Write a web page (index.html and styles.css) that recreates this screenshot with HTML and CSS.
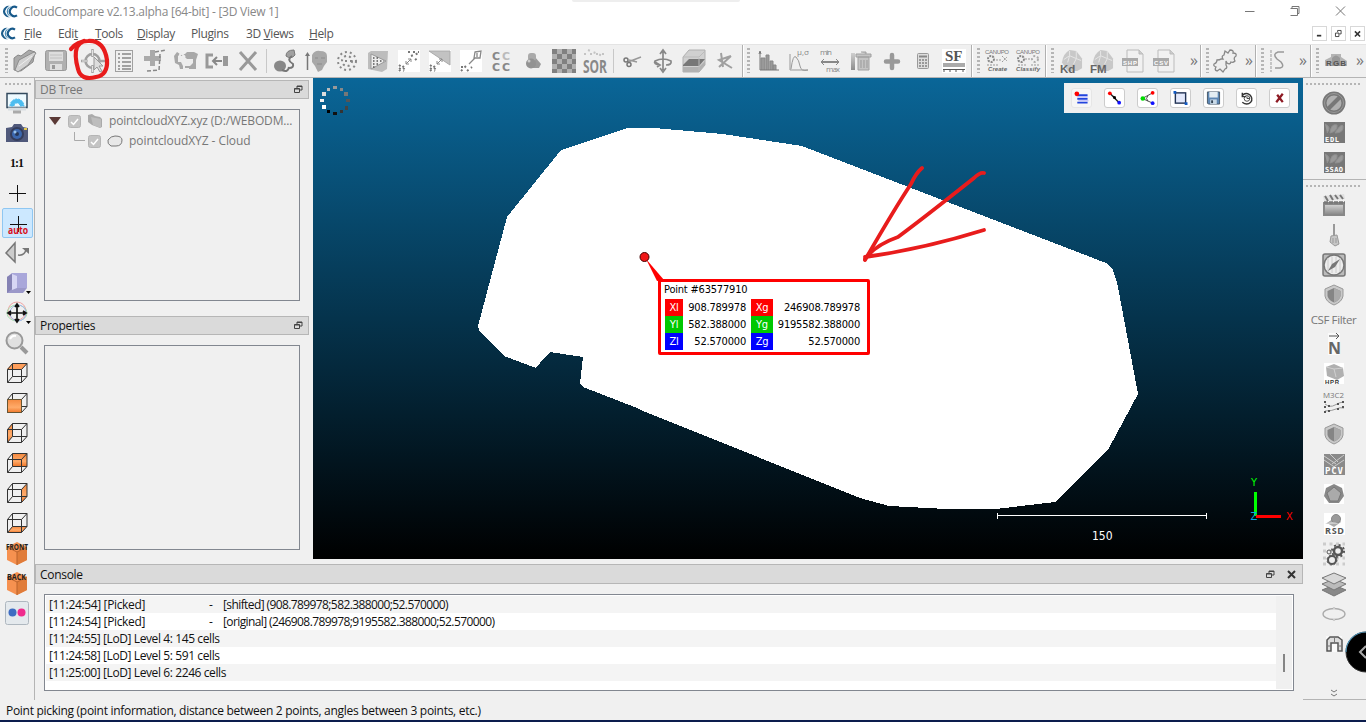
FILE: index.html
```html
<!DOCTYPE html>
<html lang="en">
<head>
<meta charset="utf-8">
<title>CloudCompare v2.13.alpha [64-bit] - [3D View 1]</title>
<link rel="stylesheet" href="styles.css">
</head>
<body>
<svg class="defs" aria-hidden="true">
  <defs>
    <linearGradient id="gGrey" x1="0" y1="0" x2="0" y2="1"><stop offset="0" stop-color="#cfcfcf"/><stop offset="1" stop-color="#8c8c8c"/></linearGradient>
    <linearGradient id="gOrange" x1="0" y1="0" x2="0" y2="1"><stop offset="0" stop-color="#f58a40"/><stop offset=".6" stop-color="#ffab6a"/><stop offset="1" stop-color="#f0782a"/></linearGradient>
    <symbol id="logo" viewBox="0 0 16 14"><path d="M7.500 2.200A5 5 0 1 0 7.500 11.800" fill="none" stroke="#1c5d8c" stroke-width="2.400"/><path d="M11 2.200A5 5 0 1 0 11 11.800" fill="none" stroke="#fff" stroke-width="3.600"/><path d="M11 2.200A5 5 0 1 0 11 11.800" fill="none" stroke="#4e8fb8" stroke-width="1.400"/><path d="M15 2.800A5 5 0 1 0 15 11.200" fill="none" stroke="#fff" stroke-width="3.600"/><path d="M15 2.800A5 5 0 1 0 15 11.200" fill="none" stroke="#17598a" stroke-width="2.400"/></symbol>
    <symbol id="float" viewBox="0 0 9 9"><path d="M3 3V1h5v4H6M3 1.500h5M.5 3.500h5v4h-5zM.5 4h5" fill="none" stroke="currentColor"/></symbol>
    <symbol id="wire" viewBox="0 0 24 24"><path d="M2.500 8.500h14v13h-14zM7.500 2.500h14.500v13H7.500zM2.500 8.500l5-6M16.500 8.500l5.500-6M16.500 21.500l5.500-6M2.500 21.500l5-6" fill="none" stroke="#333"/></symbol>
    <symbol id="shield" viewBox="0 0 24 24"><path d="M12 2l9 4v7q-1 6-9 9-8-3-9-9V6z" fill="#c9c9c9" stroke="#999"/><path d="M12 5l6.500 3v5q-1 4-6.500 6.500-5.500-2.500-6.500-6.500V8z" fill="#858585"/><path d="M12 5l6.500 3v5q-1 4-6.500 6.500z" fill="#aaa"/></symbol>
    <symbol id="rock" viewBox="0 0 24 24"><path d="M2 14Q3 5 10 1l7 1 6 8v10l-5 3H8z" fill="#c8c8c8"/><path d="M4 11l6-4 7 3 5 2M10 2v5l-2 7M17 2v8l-3 6" fill="none" stroke="#e6e6e6"/></symbol>
  </defs>
</svg>

<header class="titlebar">
  <svg class="logo"><use href="#logo"/></svg>
  <span class="title">CloudCompare v2.13.alpha [64-bit] - [3D View 1]</span>
  <svg class="winctl" viewBox="0 0 106 14"><path d="M2 6.500h9.500M47.500 3.500h7v7h-7M49 3V1.500h7v7h-1.500M93 1.500l9 9M102 1.500l-9 9" fill="none" stroke="#777"/></svg>
</header>
<nav class="menubar">
  <svg class="logo"><use href="#logo"/></svg>
  <span class="m1"><u>F</u>ile</span><span class="m2">Edi<u>t</u></span><span class="m3"><u>T</u>ools</span><span class="m4"><u>D</u>isplay</span><span class="m5">Plugins</span><span class="m6">3D <u>V</u>iews</span><span class="m7"><u>H</u>elp</span>
  <span class="mdi">
    <svg viewBox="0 0 14 15"><path d="M4 10h5" stroke="#333" stroke-width="2"/></svg>
    <svg viewBox="0 0 14 15"><path d="M6 6V4h4v4H8M3.500 7h4v4h-4z" fill="none" stroke="#333"/></svg>
    <svg viewBox="0 0 14 15"><path d="M4 5l6 6M10 5l-6 6" stroke="#333" stroke-width="1.800"/></svg>
  </span>
</nav>

<div class="toolbars">
  <div class="tb tb1"><i class="grip"></i>
    <svg class="ic" viewBox="0 0 24 24"><path d="M1 21V9l4-3 3 1 8-6 6 2-2 10-12 9z" fill="#aaa" stroke="#888"/><path d="M2 21L6 11 21 3l2 1-8 12-10 7z" fill="#d2d2d2" stroke="#8d8d8d"/><path d="M6 17L19 7" stroke="#eee"/></svg>
    <svg class="ic" viewBox="0 0 24 24"><rect x="1.500" y="1.500" width="21" height="20" rx="2" fill="#b0b0b0" stroke="#999"/><rect x="5" y="3" width="14" height="9" fill="#ddd"/><path d="M6 6h12M6 9h12" stroke="#c0c0c0"/><rect x="6" y="15" width="12" height="6" fill="#dedede"/><rect x="8" y="16" width="3" height="4" fill="#999"/></svg>
    <svg class="ic pick" viewBox="0 0 24 24"><circle cx="11.500" cy="12" r="7" fill="none" stroke="#a0a0a0" stroke-width="2.500"/><path d="M11.500 0v8M11.500 16v8M0 12h7M16 12h8" stroke="#a5a5a5" stroke-width="2.500"/><path d="M11.500 1v6M11.500 17v6M1 12h6" stroke="#e5e5e5"/><path d="M13 8v13l3-3 3 5 2-1-3-5h4z" fill="#ddd" stroke="#999"/></svg>
    <svg class="ic" viewBox="0 0 24 24"><rect x="3.500" y="1.500" width="17" height="21" fill="#efefef" stroke="#a0a0a0"/><path d="M6 5h2M6 9h2M6 13h2M6 17h2M6 20h2M10 5h9M10 9h9M10 13h9M10 17h9M10 20h9" stroke="#888" stroke-width="1.500"/></svg>
    <svg class="ic" viewBox="0 0 24 24"><path d="M9.500 1v16M1 9.500h17" stroke="#aaa" stroke-width="5"/><path d="M12 3l11-2M17 5l-1 17M4 22l12-1" stroke="#888" stroke-width="1.500" stroke-dasharray="4 2" fill="none"/></svg>
    <svg class="ic" viewBox="0 0 24 24"><path d="M0 7l3-4 3 2h5l2-2h7l4 2-2 6v9H6l-1-4-4-2z" fill="#a8a8a8"/><path d="M4 7h6l3 3h6v4l-3 3H9l-2-4H4z" fill="#ededed"/><path d="M5 8l2-4 4 4M10 14v6h5" stroke="#eee" fill="none" stroke-width="2"/></svg>
    <svg class="ic" viewBox="0 0 24 24"><path d="M8 6H2v12h6" fill="none" stroke="#999" stroke-width="3"/><path d="M17 12H8M12 8l-4 4 4 4" fill="none" stroke="#888" stroke-width="2"/><rect x="18" y="7" width="5" height="10" fill="#999"/></svg>
    <svg class="ic" viewBox="0 0 24 24"><path d="M4 3l16 18M20 3L4 21" stroke="#999" stroke-width="3"/></svg>
    <i class="sep"></i>
    <svg class="ic" viewBox="0 0 24 24"><ellipse cx="7" cy="17" rx="6" ry="5.500" fill="#888"/><path d="M13 7q0-6 8-6l1 5q-4 5-9 1z" fill="#a0a0a0" stroke="#777"/><path d="M19 7q-6 4 1 8 1 4-4 4M9 21q6 3 7-3" fill="none" stroke="#777" stroke-width="2"/></svg>
    <svg class="ic" viewBox="0 0 24 24"><path d="M3.500 21V5" stroke="#777" stroke-width="1.500"/><path d="M1 7l2.500-4L6 7z" fill="#777"/><path d="M8 6q3-5 8-4 7 0 7 5v6l-3 4-2 4-4 2-3-6-3-4z" fill="#a8a8a8"/><path d="M11 9h3M17 9h4M13 15h5" stroke="#8c8c8c"/></svg>
    <svg class="ic" viewBox="0 0 24 24" fill="none" stroke="#888" stroke-width="2" stroke-dasharray="2 3"><circle cx="12" cy="12" r="9"/><circle cx="12" cy="12" r="5"/><path d="M10 12h7"/></svg>
    <svg class="ic" viewBox="0 0 24 24"><path d="M2 4l3-2h17l-1 18-5 3-14-3z" fill="#bdbdbd"/><path d="M5 5l15 7-15 8z" fill="#ededed" stroke="#999"/><path d="M7 9h6M7 12h11M7 15h7M7 18h3" stroke="#555" stroke-width="1.500" stroke-dasharray="1.500 2"/></svg>
    <svg class="ic" viewBox="0 0 24 24"><path fill="#fff" d="M1 1h22v22H1z"/><path d="M9 15l5-5M9 12v3h3M14 13v-3h-3" fill="none" stroke="#888"/><path d="M2 22l5-5M2 16l8 6M11 3h11M14 7l8-3M18 11l4-3M2 19l5 3" stroke="#777" stroke-width="2" stroke-dasharray="2 3"/></svg>
    <svg class="ic" viewBox="0 0 24 24"><path fill="#fff" d="M1 1h22v22H1z"/><path d="M1 2h21v14z" fill="#c2c2c2" stroke="#aaa"/><path d="M9 15l5-5M9 12v3h3M14 13v-3h-3" fill="none" stroke="#888"/><path d="M2 22l5-5M2 16l8 6M2 19l5 3" stroke="#777" stroke-width="2" stroke-dasharray="2 3"/></svg>
    <svg class="ic" viewBox="0 0 24 24"><path fill="#fff" d="M1 1h22v22H1z"/><path d="M16 3l6-1-1 7h-6zM18 4v4M16 9l-6 6" fill="none" stroke="#888" stroke-width="1.300"/><path d="M2 22l6-6M8 22l5-4M2 18h2" stroke="#777" stroke-width="2" stroke-dasharray="2 3"/></svg>
    <svg class="ic cc" viewBox="0 0 24 24"><text x="2" y="11">C</text><text x="12" y="11" opacity=".5">C</text><text x="2" y="22">C</text><text x="12" y="22">C</text></svg>
    <svg class="ic" viewBox="0 0 24 24"><path d="M14 8l6 7-2 4h-7z" fill="#999"/><rect x="7" y="4" width="8" height="8" rx="3" fill="#aaa"/><circle cx="10" cy="14.500" r="5" fill="#929292"/><circle cx="8" cy="12" r="1.500" fill="#ccc"/></svg>
    <svg class="ic" viewBox="0 0 24 24"><path fill="#808080" d="M0 0h24v24H0z"/><path d="M5 0h5v5H5zM15 0h5v5h-5zM0 5h5v5H0zM10 5h5v5h-5zM20 5h4v5h-4zM5 10h5v5H5zM15 10h5v5h-5zM0 15h5v5H0zM10 15h5v5h-5zM20 15h4v5h-4zM5 20h5v4H5zM15 20h5v4h-5z" fill="#b1b1b1"/></svg>
    <svg class="ic" viewBox="0 0 24 24"><path d="M1 5h22M5 1l15 6" stroke="#c4c4c4" stroke-width="2" stroke-dasharray="2 4"/><text x="0" y="24" class="sor" textLength="24" lengthAdjust="spacingAndGlyphs">SOR</text></svg>
    <i class="sep"></i>
    <svg class="ic" viewBox="0 0 24 24"><path d="M8 13l13-5M9 11l8 2" stroke="#999" stroke-width="1.500"/><circle cx="6" cy="11" r="2" fill="none" stroke="#777" stroke-width="1.500"/><circle cx="9" cy="15.500" r="2" fill="none" stroke="#777" stroke-width="1.500"/></svg>
    <svg class="ic" viewBox="0 0 24 24"><path d="M12 3v18M9 5l3-4 3 4M9 19l3 4 3-4M9 16q-7-1-5-4 8-4 16 0 1 4-5 4M4 13l5 3-3 2" fill="none" stroke="#888" stroke-width="1.700"/></svg>
    <svg class="ic" viewBox="0 0 24 24"><path d="M1 8l6-7h16v15l-6 7H1z" fill="#d0d0d0" stroke="#b0b0b0"/><path d="M1 16l6-6h16l-6 7H1z" fill="#777"/><path d="M1 18h16l6-6v4l-6 7H1z" fill="#b2b2b2"/><path d="M17 22V9M1 8h16l6-6" fill="none" stroke="#bbb"/></svg>
    <svg class="ic" viewBox="0 0 24 24"><path d="M8 4l2 14M18 7L6 11l13 8M6 18L18 7" fill="none" stroke="#a0a0a0" stroke-width="2"/></svg>
  </div>
  <div class="tb tb2"><i class="grip"></i>
    <svg class="ic" viewBox="0 0 24 24"><path d="M5 21V9h4v12M10 21V6h3v15M14 21V12h3v9M17 21v-5h3v5" fill="#999" stroke="#888"/><path d="M4 3v18h19M3 5l1-3 1 3" fill="none" stroke="#777"/></svg>
    <svg class="ic" viewBox="0 0 24 24"><path d="M3 5v16h18M4 20Q6 5 9 8t4 9 8 4" fill="none" stroke="#999"/><text x="10" y="6" class="tiny grey">μ,σ</text></svg>
    <svg class="ic" viewBox="0 0 24 24"><text x="2" y="6" class="tiny grey" textLength="12">min</text><text x="8" y="23" class="tiny grey" textLength="14">max</text><path d="M3 13h18" stroke="#888" stroke-width="2"/><path d="M6 10l-3 3 3 3M18 10l3 3-3 3" fill="none" stroke="#888"/></svg>
    <svg class="ic" viewBox="0 0 24 24"><rect x="2" y="4" width="4" height="17" fill="url(#gGrey)"/><path d="M9 8h11v13H9zM7 5h15v3H7zM12 3h5v2" fill="#c4c4c4" stroke="#a0a0a0"/><path d="M12 11v8M15 11v8M18 11v8" stroke="#999"/></svg>
    <svg class="ic" viewBox="0 0 24 24"><path d="M12 6v13M6 12.500h12" stroke="#999" stroke-width="4.500" stroke-linecap="round"/></svg>
    <svg class="ic" viewBox="0 0 24 24"><rect x="6.500" y="4.500" width="11" height="15" rx="1" fill="#ddd" stroke="#999"/><path d="M8 7.500h8" stroke="#888" stroke-width="2"/><path d="M8 11h8M8 14h8M8 17h8" stroke="#999" stroke-width="2" stroke-dasharray="2 1"/></svg>
    <svg class="ic" viewBox="0 0 24 24"><path fill="#fff" d="M0 0h24v24H0z"/><text x="3" y="12" class="sf">SF</text><path d="M1 16h22" stroke="#aaa" stroke-width="4"/><path d="M1 20.500h22M2 20v3M8 20v3M14 20v3M21 20v3" stroke="#555"/></svg>
  </div>
  <div class="tb tb3"><i class="grip"></i>
    <svg class="ic wide" viewBox="0 0 26 24"><text x="1" y="5" class="micro" textLength="24">CANUPO</text><circle cx="7" cy="10" r="3" fill="none" stroke="#888" stroke-width="2" stroke-dasharray="2 1"/><path d="M12 11h5M3 16h11M18 7l5 5M18 13l5-5" stroke="#999" stroke-dasharray="2 1"/><text x="4" y="22" class="micro bold" textLength="19">Create</text></svg>
    <svg class="ic wide" viewBox="0 0 26 24"><text x="1" y="5" class="micro" textLength="24">CANUPO</text><circle cx="6" cy="10" r="3" fill="none" stroke="#888" stroke-width="2" stroke-dasharray="2 1"/><circle cx="20" cy="10" r="3" fill="none" stroke="#aaa" stroke-width="2" stroke-dasharray="2 2"/><path d="M10 10h6M3 16h9M16 16h8" stroke="#999" stroke-dasharray="2 1"/><text x="1" y="22" class="micro bold" textLength="24">Classify</text></svg>
  </div>
  <div class="tb tb4"><i class="grip"></i>
    <svg class="ic" viewBox="0 0 24 24"><use href="#rock" width="23" height="23"/><text x="0" y="24" class="kd">Kd</text></svg>
    <svg class="ic" viewBox="0 0 24 24"><use href="#rock" width="23" height="23"/><text x="-1" y="24" class="kd">FM</text></svg>
    <svg class="ic" viewBox="0 0 24 24"><path d="M5 1h12l4 4v18H5z" fill="#f1f1f1" stroke="#bbb"/><path d="M17 1v4h4" fill="#ccc" stroke="#bbb"/><path fill="#aaa" d="M0 9h16v8H0z"/><text x="1" y="15.500" class="micro white" textLength="14">SHP</text></svg>
    <svg class="ic" viewBox="0 0 24 24"><path d="M5 1h12l4 4v18H5z" fill="#f1f1f1" stroke="#bbb"/><path d="M17 1v4h4" fill="#ccc" stroke="#bbb"/><path fill="#aaa" d="M0 9h16v8H0z"/><text x="1" y="15.500" class="micro white" textLength="14">CSV</text></svg>
    <b class="more">»</b>
  </div>
  <div class="tb tb5"><i class="grip"></i>
    <svg class="ic" viewBox="0 0 24 24"><path d="M10 10Q8 7 11 6l1-4 3 2 2-3q4 0 3 3 4 0 3 3-3 2-1 5-2 2-4 1-1 3-4 1l-1-2 0 4q2 3-1 4l-2 3-3-3-3 2q-3-1-1-4-3-1-2-3 3-1 3-4 3 0 4-1z" fill="#eee" stroke="#888" stroke-width="1.300"/></svg>
    <b class="more">»</b>
  </div>
  <div class="tb tb6"><i class="grip"></i>
    <svg class="ic" viewBox="0 0 24 24"><path d="M3 1v22" stroke="#999" stroke-dasharray="3 1"/><path d="M16 3H10Q4 5 9 10l4 3q4 5-1 6H7" fill="none" stroke="#999" stroke-width="1.500"/></svg>
    <b class="more">»</b>
  </div>
  <div class="tb tb7"><i class="grip"></i>
    <svg class="ic" viewBox="0 0 24 24"><path d="M1 11l6-3V5h10v3l6 4v5H1z" fill="#b4b4b4"/><path d="M8 9q4-5 8 0v8H8z" fill="#999"/><text x="2" y="17" class="rgb" textLength="20">RGB</text></svg>
    <b class="more">»</b>
  </div>
</div>

<main class="body">
  <aside class="left"><i class="hgrip"></i>
    <svg class="ic" viewBox="0 0 24 24"><rect x="2" y="2.500" width="20" height="14" fill="#eefaff" stroke="#334a5e" stroke-width="1.500"/><path d="M3 16.500h18v3H3z" fill="#d8dee2"/><path d="M5 15a7 7 0 0 1 14 0h-4a3 3 0 0 0-6 0z" fill="#4dbdf0" stroke="#4dbdf0" stroke-dasharray="2 1"/><path d="M8 21h8" stroke="#aaa" stroke-width="3"/></svg>
    <svg class="ic" viewBox="0 0 24 24"><path d="M1 7l6-1 2-3h7l2 3 5 1v14H1z" fill="#50597b"/><circle cx="12" cy="13" r="7" fill="#343d5c"/><circle cx="12" cy="13" r="5" fill="#3b67ae"/><circle cx="12" cy="13" r="2" fill="#263656"/><circle cx="10" cy="11" r="1.500" fill="#9ac3ea"/><path d="M19 7h3v2h-3z" fill="#e5c84c"/></svg>
    <svg class="ic" viewBox="0 0 24 24"><text x="5" y="16" class="one" textLength="14">1:1</text></svg>
    <svg class="ic" viewBox="0 0 24 24"><path d="M12.500 4v17M4 12.500h17" stroke="#111"/></svg>
    <span class="active"><svg class="ic" viewBox="0 0 24 24"><path d="M13.500 5v16M5 13.500h17" stroke="#111"/><text x="3" y="23" class="auto" textLength="20" lengthAdjust="spacingAndGlyphs">auto</text></svg></span>
    <svg class="ic" viewBox="0 0 24 24"><path d="M10 2v19L1 12z" fill="#ccc" stroke="#777" stroke-width="1.500"/><path d="M13 14q6 1 8-5" fill="none" stroke="#777" stroke-width="1.500"/><path d="M17 7h7v6z" fill="#777"/></svg>
    <svg class="ic" viewBox="0 0 28 24"><path d="M2 6l5-4h15v15l-4 5H2z" fill="#9b98c9"/><path d="M7 2h15v15H7z" fill="#a9a7da"/><path d="M2 6l5-3v15l-5 4z" fill="#8582b4"/><path d="M7 3l5 2v12l-5 2z" fill="#d7d6f4"/><path d="M21 20h5l-2.500 3z" fill="#000"/></svg>
    <svg class="ic" viewBox="0 0 28 24"><circle cx="12" cy="10" r="9" fill="none" stroke="#f1a4a4"/><ellipse cx="12" cy="12" rx="10" ry="8" fill="none" stroke="#a8dcab"/><circle cx="13" cy="12" r="8" fill="none" stroke="#a4b8eb"/><path d="M12 4v16M4 12h16M10 6l2-3 2 3M10 18l2 3 2-3M6 10l-3 2 3 2M18 10l3 2-3 2" fill="none" stroke="#111" stroke-width="1.700"/><path d="M21 20h5l-2.500 3z"/></svg>
    <svg class="ic" viewBox="0 0 24 24"><path d="M16 16l6 6" stroke="#999" stroke-width="4"/><circle cx="9.500" cy="9.500" r="8" fill="#e0e0e0" stroke="#999" stroke-width="2"/><path d="M5 8q2-4 6-3" stroke="#fff" fill="none" stroke-width="2"/></svg>
    <svg class="ic" viewBox="0 0 24 24"><path d="M2 8l5-5h15l-5 5z" fill="#ff9e5a"/><use href="#wire"/></svg>
    <svg class="ic" viewBox="0 0 24 24"><use href="#wire"/><path d="M2.500 8.500h14v13h-14z" fill="url(#gOrange)" stroke="#653"/></svg>
    <svg class="ic" viewBox="0 0 24 24"><path d="M2.500 8.500l5-6v13l-5 6z" fill="url(#gOrange)"/><use href="#wire"/></svg>
    <svg class="ic" viewBox="0 0 24 24"><path d="M7 3h15v12H7z" fill="url(#gOrange)"/><use href="#wire"/></svg>
    <svg class="ic" viewBox="0 0 24 24"><path d="M16.500 8.500l5.500-6v13l-5.500 6z" fill="url(#gOrange)"/><use href="#wire"/></svg>
    <svg class="ic" viewBox="0 0 24 24"><path d="M2.500 21.500l5-6H22l-5.500 6z" fill="url(#gOrange)"/><use href="#wire"/></svg>
    <svg class="ic" viewBox="0 0 24 24"><path d="M12 1l10 5v13l-10 5L2 19V6z" fill="#f69150"/><path d="M12 11l10-5v13l-10 5z" fill="#e07c3a"/><path d="M2 6l10 5v13M12 11l10-5" fill="none" stroke="#b9622c"/><text x="1" y="9" class="face" textLength="22" lengthAdjust="spacingAndGlyphs">FRONT</text></svg>
    <svg class="ic" viewBox="0 0 24 24"><path d="M12 1l10 5v13l-10 5L2 19V6z" fill="#f69150"/><path d="M12 11l10-5v13l-10 5z" fill="#e07c3a"/><path d="M2 6l10 5v13M12 11l10-5" fill="none" stroke="#b9622c"/><text x="2" y="9" class="face" textLength="19" lengthAdjust="spacingAndGlyphs">BACK</text></svg>
    <svg class="ic" viewBox="0 0 24 24"><rect x=".5" y=".5" width="23" height="23" rx="2" fill="#e4e9ed" stroke="#aeb7bf"/><circle cx="7.500" cy="11.500" r="4" fill="#3d6cc2"/><circle cx="16.500" cy="11.500" r="4" fill="#ef2b8d"/></svg>
  </aside>

  <section class="center">
    <div class="upper">
      <div class="docks">
        <div class="dockhead dim"><span>DB Tree</span><svg class="fl"><use href="#float"/></svg></div>
        <div class="tree">
          <div class="row"><svg class="tri" viewBox="0 0 12 8"><path d="M0 0h12L6 8z" fill="#5b3a36"/></svg><svg class="chk" viewBox="0 0 13 13"><rect x=".5" y=".5" width="12" height="12" rx="2" fill="#c4c4c4" stroke="#b5b5b5"/><path d="M3 7l2.500 2.500L10 4" fill="none" stroke="#fff" stroke-width="1.500"/></svg><svg class="fold" viewBox="0 0 16 14"><path d="M1 1l4-1 3 2 5 1 2 2v8l-2 1-8-3-4-3z" fill="#aaa"/><path d="M4 3l10 2v9l-8-3z" fill="#bdbdbd"/></svg><span class="file">pointcloudXYZ.xyz (D:/WEBODM...</span></div>
          <div class="row child"><svg class="branch" viewBox="0 0 12 10"><path d="M1.500 0v8.500H12" fill="none" stroke="#aaa"/></svg><svg class="chk" viewBox="0 0 13 13"><rect x=".5" y=".5" width="12" height="12" rx="2" fill="#c4c4c4" stroke="#b5b5b5"/><path d="M3 7l2.500 2.500L10 4" fill="none" stroke="#fff" stroke-width="1.500"/></svg><svg class="fold" viewBox="0 0 16 14"><path d="M4 12Q0 10 1 6q3-4 7-4 7 0 7 4 0 6-6 6z" fill="#e8e8e8" stroke="#777"/></svg><span>pointcloudXYZ - Cloud</span></div>
        </div>
        <div class="dockhead prop"><span>Properties</span><svg class="fl"><use href="#float"/></svg></div>
        <div class="props"></div>
      </div>
      <div class="view">
        <svg class="scene" viewBox="313 78 990 481">
          <polygon shape-rendering="crispEdges" fill="#fff" points="628,128 654,128 723,134 802,146 1106,263 1112,268 1117,282 1138,394 1109,448 1055,502 996,509 947,509 889,506 860,498 643,411 637,408 583,387 580,384 583,357 550,352 545,357 536,368 504,356 480,332 478,326 507,217 561,150"/>
          <g shape-rendering="crispEdges"><path d="M346 99h4v3h-4z" fill="#555"/><path d="M345 106h3v4h-3z" fill="#444"/><path d="M340 110h3v3h-3z" fill="#333"/><path d="M333 112h4v3h-4z" fill="#111"/><path d="M327 110h3v3h-3z" fill="#000"/><path d="M322 105h4v4h-4z" fill="#fff"/><path d="M320 99h4v3h-4z" fill="#f2f2f2"/><path d="M322 92h4v4h-4z" fill="#ddd"/><path d="M327 88h3v3h-3z" fill="#bbb"/><path d="M333 86h4v3h-4z" fill="#999"/><path d="M340 88h3v3h-3z" fill="#888"/><path d="M344 92h4v4h-4z" fill="#777"/></g>
          <path d="M646 259l11 22 7-1z" fill="#f00"/><circle cx="644.500" cy="257" r="4.500" fill="#f01818" stroke="#400"/>
          <path d="M997.500 513v6M1206.500 513v6M997 515.500h210" stroke="#fff" fill="none"/>
          <text x="1092" y="540" class="scale">150</text>
          <path d="M1255.500 492v24" stroke="#0f0" stroke-width="3"/><path d="M1256 516.500h25" stroke="#f00" stroke-width="3"/>
          <text x="1251" y="486" class="axis" fill="#0f0">Y</text><text x="1286" y="520" class="axis" fill="#f00">X</text><text x="1250.500" y="520" class="axis" fill="#00a8e8">Z</text>
          <g fill="none" stroke="#e81c1c" stroke-width="3.800" stroke-linecap="round" stroke-linejoin="round"><path d="M922 168Q916 173 911 184Q895 208 865 260"/><path d="M984 173Q980 172 974 178Q925 217 898 237Q875 245 865 259"/><path d="M984 230Q923 249 865 257"/></g>
        </svg>
        <div class="viewtools">
          <span class="soft"><svg viewBox="0 0 15 15"><path d="M3 4.500h11M3 8.500h11M3 12.500h11" stroke="#24d" stroke-width="2"/><path d="M3 6.500h11M4 10.500h11" stroke="#aaf"/><circle cx="2.500" cy="3" r="2.500" fill="#f00"/></svg></span>
          <span><svg viewBox="0 0 15 15"><path d="M2 2l11 11" stroke="#222" stroke-width="1.500"/><circle cx="2.500" cy="2.500" r="2" fill="#f00"/><circle cx="12.500" cy="12.500" r="2" fill="#11f"/><path d="M6 5l3 1v3l-3-1z"/></svg></span>
          <span><svg viewBox="0 0 15 15"><path d="M13 2L2 8l11 5M8 5q-3 3 0 6" fill="none" stroke="#444"/><circle cx="13" cy="2" r="2" fill="#f00"/><circle cx="2.500" cy="8" r="2.500" fill="#0d0"/><circle cx="13" cy="13" r="2" fill="#11f"/></svg></span>
          <span><svg viewBox="0 0 15 15"><rect x="2" y="2" width="11" height="11" fill="#e2e8fb" stroke="#235" stroke-width="1.500"/><path d="M0 0h3v3H0zM12 12h3v3h-3z" fill="#125ac4"/></svg></span>
          <span><svg viewBox="0 0 15 15"><path d="M1 1h13v13H2l-1-1z" fill="#5d87b4" stroke="#456"/><path d="M3 1h9v6H3z" fill="#e4edf3"/><path d="M4 9h7v5H4z" fill="#c9d9e7"/><path d="M5 10h2v3H5z" fill="#345"/></svg></span>
          <span><svg viewBox="0 0 15 15"><path d="M3 2v4h4M3 5q3-4 8-1 4 4 1 8-4 4-9 0" fill="none" stroke="#333" stroke-width="1.500"/><circle cx="8" cy="8" r="3" fill="none" stroke="#444"/><path d="M8 6v2h3" fill="none" stroke="#333"/></svg></span>
          <span><svg viewBox="0 0 15 15"><path d="M5 4l6 8M11 3l-7 9" stroke="#8e1b24" stroke-width="2.400"/></svg></span>
        </div>
        <div class="callout">
          <div class="ptitle">Point #63577910</div>
          <div class="coords">
            <b class="x">Xl</b><span>908.789978</span><b class="x">Xg</b><span>246908.789978</span>
            <b class="y">Yl</b><span>582.388000</span><b class="y">Yg</b><span>9195582.388000</span>
            <b class="z">Zl</b><span>52.570000</span><b class="z">Zg</b><span>52.570000</span>
          </div>
        </div>
      </div>
    </div>
    <div class="dockhead console-head"><span>Console</span><svg class="fl"><use href="#float"/></svg><svg class="close" viewBox="0 0 9 9"><path d="M1 1l7 7M8 1L1 8" stroke="#333" stroke-width="2"/></svg></div>
    <div class="console">
      <div class="lines">
        <p><span class="tag">[11:24:54] [Picked]</span><span class="dash">-</span><span class="val">[shifted] (908.789978;582.388000;52.570000)</span></p>
        <p><span class="tag">[11:24:54] [Picked]</span><span class="dash">-</span><span class="val">[original] (246908.789978;9195582.388000;52.570000)</span></p>
        <p>[11:24:55] [LoD] Level 4: 145 cells</p>
        <p>[11:24:58] [LoD] Level 5: 591 cells</p>
        <p>[11:25:00] [LoD] Level 6: 2246 cells</p>
      </div>
      <div class="scroll"><i></i></div>
    </div>
  </section>

  <aside class="right">
    <div class="rgroup r1"><i class="hgrip"></i>
      <svg class="ic" viewBox="0 0 24 24"><circle cx="12" cy="12" r="9.500" fill="#b0b0b0" stroke="#777" stroke-width="4"/><circle cx="12" cy="12" r="9.500" fill="none" stroke="#999"/><path d="M6 18L18 6" stroke="#777" stroke-width="4"/></svg>
      <svg class="ic" viewBox="0 0 24 24"><path fill="#777" d="M2 1h21v21H2z"/><path d="M8 12q1-10 7-8 1 6-7 8M13 12q6-10 8-7 1 7-8 7M3 3q7 3 2 9" fill="#999" stroke="#909090"/><text x="3" y="21" class="pix" textLength="14">EDL</text></svg>
      <svg class="ic" viewBox="0 0 24 24"><path fill="#777" d="M2 1h21v21H2z"/><path d="M8 12q1-10 7-8 1 6-7 8M13 12q6-10 8-7 1 7-8 7M3 3q7 3 2 9" fill="#999" stroke="#909090"/><text x="3" y="21" class="pix" textLength="18">SSAO</text></svg>
    </div>
    <div class="rgroup r2"><i class="hgrip"></i>
      <svg class="ic" viewBox="0 0 24 24"><path d="M1 9h22v14H1z" fill="#888"/><path d="M3 12h18v9H3z" fill="url(#gGrey)"/><path d="M1 3l21-2 1 5-21 2z" fill="#e0e0e0"/><path d="M3 3l3 5M8 2l3 5M13 2l3 4M18 2l3 4" stroke="#777" stroke-width="2"/><path d="M2 9.500h21" stroke="#777" stroke-width="2.500" stroke-dasharray="4 1"/></svg>
      <svg class="ic" viewBox="0 0 24 24"><path d="M12 1v12" stroke="#999" stroke-width="2"/><path d="M9 13l6-1 2 9-4 2-5-4z" fill="#c6c6c6" stroke="#999"/><path d="M11 15v5M14 15v5" stroke="#999"/></svg>
      <svg class="ic" viewBox="0 0 24 24"><rect x="1" y="1" width="22" height="22" rx="2" fill="#bbb" stroke="#777" stroke-width="1.500"/><circle cx="12" cy="12" r="10" fill="#ededed" stroke="#777" stroke-width="1.500"/><path d="M6 5v14M10 4v16M14 4v16M18 5v14" stroke="#ccc"/><path d="M18 6l-5 8-7 4 4-7z" fill="#777"/></svg>
      <svg class="ic" viewBox="0 0 24 24"><use href="#shield"/></svg>
      <span class="csf">CSF Filter</span>
      <svg class="ic north" viewBox="0 0 24 24"><path fill="#fafafa" d="M6 1h12v22H6z"/><path d="M7 4h10M14 1l3 3-3 3" fill="none" stroke="#555"/><text x="6" y="22" class="n">N</text></svg>
      <svg class="ic" viewBox="0 0 24 24"><path fill="#fff" d="M2 1h20v21H2z"/><path d="M4 5l8-3 9 4 1 8-7 4-10-4z" fill="#b0b0b0"/><path d="M4 5l8 2 9-1M12 7l2 8" stroke="#d0d0d0" fill="none"/><text x="3" y="22" class="micro dark" textLength="14">HPR</text></svg>
      <svg class="ic" viewBox="0 0 24 24"><text x="1" y="6" class="tiny mid" textLength="21" lengthAdjust="spacingAndGlyphs">M3C2</text><path d="M3 12q5 4 10 1t9-3M3 19q7 0 11-2t8-1" stroke="#999" fill="none"/><path d="M3 9v13M7 13v9M16 11v9M21 9v9" stroke="#555" stroke-dasharray="2 3" stroke-width="2"/></svg>
      <svg class="ic" viewBox="0 0 24 24"><use href="#shield"/></svg>
      <svg class="ic" viewBox="0 0 24 24"><path fill="#8a8a8a" d="M2 2h21v21H2z"/><path d="M2 4l12 8M2 8l12 8M22 3L10 12M22 8l-12 8M8 2l8 8" stroke="#ccc"/><text x="3" y="22" class="pix big" textLength="18">PCV</text></svg>
      <svg class="ic" viewBox="0 0 24 24"><path fill="#fff" d="M2 2h20v20H2z"/><path d="M12 2l8 4 2 8-5 7H7l-5-7 2-8z" fill="#888"/><path d="M12 5l7 6-3 8H8l-3-8z" fill="#aaa" stroke="#777"/></svg>
      <svg class="ic" viewBox="0 0 24 24"><path fill="#fff" d="M2 1h21v22H2z"/><path d="M5 11l10-7 4 6-7 5z" fill="#aaa"/><circle cx="14" cy="7" r="4.500" fill="#999" stroke="#888"/><path d="M3 12q7-4 14 0" fill="#ccc"/><text x="3" y="21.500" class="rsd" textLength="19">RSD</text></svg>
      <svg class="ic" viewBox="0 0 24 24"><path d="M1 2h22M1 9h22M1 16h22M1 22h22" stroke="#ccc" stroke-width="3" stroke-dasharray="3 3.500"/><circle cx="16" cy="9" r="4" fill="#eee" stroke="#555" stroke-width="2.500"/><circle cx="16" cy="9" r="6" fill="none" stroke="#555" stroke-width="2" stroke-dasharray="2 2.700"/><circle cx="10" cy="18" r="4" fill="#eee" stroke="#555" stroke-width="2" /><circle cx="10" cy="18" r="5" fill="none" stroke="#555" stroke-dasharray="2 2"/><circle cx="7" cy="10" r="2" fill="none" stroke="#555"/></svg>
      <svg class="ic" viewBox="0 0 24 24"><path d="M0 18l12-5 12 5-12 6z" fill="#888" stroke="#777"/><path d="M0 12l12-5 12 5-12 6z" fill="#bbb" stroke="#777"/><path d="M0 6l12-5 12 5-12 6z" fill="#d8d8d8" stroke="#777"/></svg>
      <svg class="ic" viewBox="0 0 24 24"><ellipse cx="12" cy="12" rx="11" ry="5.500" fill="none" stroke="#aaa" stroke-width="1.300"/><path d="M11 6h2M11 18h2" stroke="#ccc" stroke-width="2"/></svg>
      <svg class="ic" viewBox="0 0 24 24"><path fill="#fafafa" d="M4 4h16v16H4z"/><path d="M5 19V8l3-3h8l4 3v11h-4v-8H9v8z" fill="#ddd" stroke="#555" stroke-width="1.500"/><path d="M12.500 5v6M5 14h4M16 14h4" stroke="#777"/></svg>
      <svg class="down" viewBox="0 0 8 8"><path d="M1 1l3 2 3-2M1 5l3 2 3-2" fill="none" stroke="#777"/></svg>
    </div>
  </aside>
</main>
<footer class="status">Point picking (point information, distance between 2 points, angles between 3 points, etc.)</footer>

<i class="notch"></i>
<svg class="ink" viewBox="0 0 44 46"><path d="M3 11Q9 3 20 3Q36 2 39 22Q40 37 28 39Q13 43 10 31Q6 17 9 9Q11 5 16 3" fill="none" stroke="#e81c1c" stroke-width="4.200" stroke-linecap="round"/></svg>
<svg class="puck" viewBox="0 0 21 42"><circle cx="21" cy="21" r="20" fill="#000" stroke="#333"/><path d="M1 21A20 20 0 0 1 21 1" fill="none" stroke="#4c8eb0" stroke-width="1.200"/><path d="M21 15l-6 6 6 6" fill="none" stroke="#aaa" stroke-width="2"/></svg>
</body>
</html>
```
FILE: styles.css
```css
* { box-sizing: border-box; }
body { margin: 0; width: 1366px; height: 722px; overflow: hidden; display: flex; flex-direction: column; position: relative; background: #f0f0f0; color: #111; font: 12px/16px "Open Sans", "Noto Sans", sans-serif; letter-spacing: -0.38px; }
.defs { position: absolute; width: 0; height: 0; }
svg { display: block; flex: none; overflow: visible; }
p { margin: 0; }
svg text { letter-spacing: 0; }

.titlebar { height: 23px; background: #fff; display: flex; align-items: center; padding: 0 17px 0 3px; color: #888; }
.logo { width: 15px; height: 13px; }
.title { margin-left: 5px; letter-spacing: -0.25px; }
.winctl { width: 106px; height: 14px; margin-left: auto; }
.menubar { height: 21px; background: #fff; display: flex; align-items: center; padding-left: 1px; color: #555; }
.menubar > span { width: 42px; white-space: nowrap; }
.menubar .m1 { margin-left: 8px; width: 34px; }
.menubar .m2 { width: 37px; }
.menubar .m4 { width: 54px; }
.menubar .m5 { width: 55px; }
.menubar .m6 { width: 63px; }
.menubar .mdi { width: auto; margin-left: auto; display: flex; gap: 4px; padding-right: 1px; }
.mdi svg { width: 15px; height: 15px; background: #fff; border: 1px solid #d8d8d8; }

.toolbars { height: 34px; display: flex; border-top: 1px solid #e4e4e4; border-bottom: 1px solid #b4b4b4; }
.tb { flex: none; display: flex; align-items: center; gap: 7px; border-right: 1px solid #b0b0b0; padding: 0 0 1px 5px; box-shadow: 1px 0 #fff; }
.ic { width: 24px; height: 24px; }
.grip { width: 3px; height: 25px; margin-right: -3px; background: repeating-linear-gradient(#b5b5b5 0 2px, #f0f0f0 2px 4px); flex: none; }
.sep { width: 1px; height: 24px; margin: 0 -1px; background: #c8c8c8; flex: none; }
.tb1 { width: 743px; }
.tb1 .grip { margin-right: -2px; }
.tb .pick { margin-left: 6px; }
.tb2 { width: 229px; padding-left: 4px; }
.tb2 .grip { margin-right: -1px; }
.tb3 { width: 74px; gap: 5px; }
.tb3 .grip { margin-right: -1px; }
.tb .wide { width: 26px; }
.tb4 { width: 155px; }
.tb4 .grip { margin-right: -1px; }
.tb5, .tb6 { width: 55px; }
.tb6 .grip { margin-right: -3px; }
.tb7 { flex: 1; border-right: 0; }
.tb7 .grip { margin-right: -2px; }
.more { font: 16px/18px "Open Sans", sans-serif; color: #777; margin-top: -1px; }
.tb4 .more { margin-left: 6px; }
.tb5 .more { margin-left: 1px; }
.tb7 .more { margin-left: 1px; }

.cc text { font: bold 11px "DejaVu Sans", sans-serif; fill: #888; }
.sor { font: bold 17px "Open Sans", sans-serif; fill: #888; }
.tiny { font: 8px "Open Sans", sans-serif; }
.grey { fill: #888; }
.mid { fill: #777; }
.sf { font: bold 15px "Liberation Serif", serif; fill: #555; }
.micro { font: 6px "Liberation Sans", sans-serif; fill: #777; }
.bold { font-weight: bold; fill: #666; font-style: italic; }
.white { fill: #fff; font-weight: bold; }
.dark { fill: #333; font-weight: bold; }
.kd { font: bold 11.5px "Liberation Sans", sans-serif; fill: #666; }
.rgb { font: bold 8px "Liberation Sans", sans-serif; fill: #555; }
.one { font: bold 12px "Liberation Serif", serif; fill: #111; }
.auto { font: bold 10px "Open Sans", sans-serif; fill: #d8101c; }
.face { font: bold 8px "Open Sans", sans-serif; fill: #222; }
.pix { font: bold 7px "DejaVu Sans Mono", monospace; fill: #fff; }
.big { font-size: 9px; }
.n { font: bold 16px "Open Sans", sans-serif; fill: #666; }
.rsd { font: bold 9px "Open Sans", sans-serif; fill: #555; }

.body { height: 622px; display: flex; }
.left { width: 35px; padding: 5px 0 0 5px; display: flex; flex-direction: column; gap: 6px; border-right: 1px solid #b4b4b4; }
.hgrip { height: 2px; width: 27px; flex: none; background: repeating-linear-gradient(90deg, #b5b5b5 0 2px, #f0f0f0 2px 4px); }
.active { width: 31px; height: 30px; margin: -3px 0 -3px -3px; padding: 2px; border: 1px solid #8fc7f2; border-radius: 2px; background: #cce8ff; }
.left .ic[viewBox="0 0 28 24"] { width: 28px; }

.center { width: 1268px; display: flex; flex-direction: column; }
.upper { height: 481px; display: flex; }
.docks { width: 278px; padding-top: 2px; }
.dockhead { height: 19px; width: 274px; display: flex; align-items: center; padding: 0 5px 0 4px; background: #dadada; border: 1px solid #b6b6b6; }
.dockhead.dim { color: #777; }
.dockhead span { flex: 1; letter-spacing: -0.3px; padding-top: 1px; }
.fl { width: 9px; height: 9px; color: #444; }
.tree { margin: 10px 0 0 9px; width: 256px; height: 192px; border: 1px solid #828790; padding-top: 1px; color: #777; letter-spacing: -0.07px; }
.row { height: 20px; display: flex; align-items: center; padding-left: 4px; }
.row span { white-space: nowrap; }
.row .file { letter-spacing: -0.16px; }
.tri { width: 12px; height: 8px; margin-right: 7px; }
.chk { width: 13px; height: 13px; margin-right: 6px; }
.fold { width: 16px; height: 14px; margin-right: 6px; }
.child { padding-left: 28px; }
.branch { width: 12px; height: 10px; margin-right: 3px; margin-top: -8px; }
.prop { margin-top: 15px; }
.props { margin: 10px 0 0 9px; width: 256px; height: 205px; border: 1px solid #828790; }

.view { position: relative; width: 990px; height: 481px; background: linear-gradient(#0a6698, #000); }
.scene { width: 990px; height: 481px; }
.scale { font: 12px "DejaVu Sans Condensed", "DejaVu Sans", sans-serif; fill: #fff; }
.axis { font: 11px "DejaVu Sans Condensed", "DejaVu Sans", sans-serif; }
.viewtools { position: absolute; left: 751px; top: 5px; width: 234px; height: 30px; background: #f0f0f0; display: flex; align-items: center; gap: 12px; padding-left: 7px; }
.viewtools span { width: 21px; height: 20px; background: #fff; border: 1px solid #ccc; border-radius: 3px; padding: 2px; }
.viewtools .soft { border-color: #e6e6e6; background: #f6f6f6; }
.viewtools span svg { width: 15px; height: 14px; }
.callout { position: absolute; left: 345px; top: 201px; width: 212px; height: 76px; background: #fff; border: 3px solid #f00; border-radius: 2px; padding: 0 0 0 3px; font: 11px/17px "DejaVu Sans Condensed", "DejaVu Sans", sans-serif; letter-spacing: -0.2px; color: #000; }
.ptitle { height: 17px; line-height: 16px; }
.coords { display: grid; grid-template-columns: 18px 68px 22px 87px; grid-auto-rows: 17px; padding-left: 1px; }
.coords span { text-align: right; padding-right: 5px; }
.coords span:nth-child(4n) { padding-right: 0; }
.coords b { font-weight: normal; color: #fff; text-align: center; }
.x { background: #f00; }
.y { background: #00c800; }
.z { background: #00f; }

.console-head { width: 1268px; height: 20px; margin-top: 5px; padding-right: 6px; }
.close { width: 9px; height: 9px; margin-left: 12px; }
.console { width: 1250px; height: 97px; margin: 10px 0 0 9px; border: 1px solid #828790; background: #fff; display: flex; padding: 1px; }
.lines { width: 1230px; }
.lines p { height: 17px; line-height: 17px; padding-left: 3px; display: flex; white-space: pre; letter-spacing: -0.4px; }
.lines p:nth-child(odd) { background: #f4f4f4; }
.tag { width: 160px; letter-spacing: -0.35px; }
.dash { width: 14px; }
.val { letter-spacing: -0.6px; }
.scroll { flex: 1; background: #f0f0f0; }
.scroll i { display: block; width: 2px; height: 18px; margin: 58px 0 0 7px; background: #858585; }

.right { width: 63px; border-bottom: 1px solid #b4b4b4; }
.rgroup { display: flex; flex-direction: column; align-items: center; gap: 6px; padding: 5px 2px 0 0; }
.rgroup .hgrip { width: 55px; }
.r1 { height: 102px; border-bottom: 1px solid #b4b4b4; }
.csf { font-size: 11.5px; line-height: 14px; color: #777; white-space: nowrap; margin-bottom: -1px; }
.down { width: 8px; height: 8px; margin-top: 27px; }
.status { height: 22px; padding: 3px 0 0 6px; border-bottom: 2px solid #0c1d4d; line-height: 16px; letter-spacing: -0.29px; white-space: nowrap; }

.notch { position: absolute; left: 572px; top: 0; width: 168px; height: 2px; background: #eee; border-radius: 0 0 3px 3px; }
.ink { position: absolute; left: 68px; top: 38px; width: 44px; height: 46px; }
.puck { position: absolute; left: 1345px; top: 631px; width: 21px; height: 42px; overflow: hidden; }
```
